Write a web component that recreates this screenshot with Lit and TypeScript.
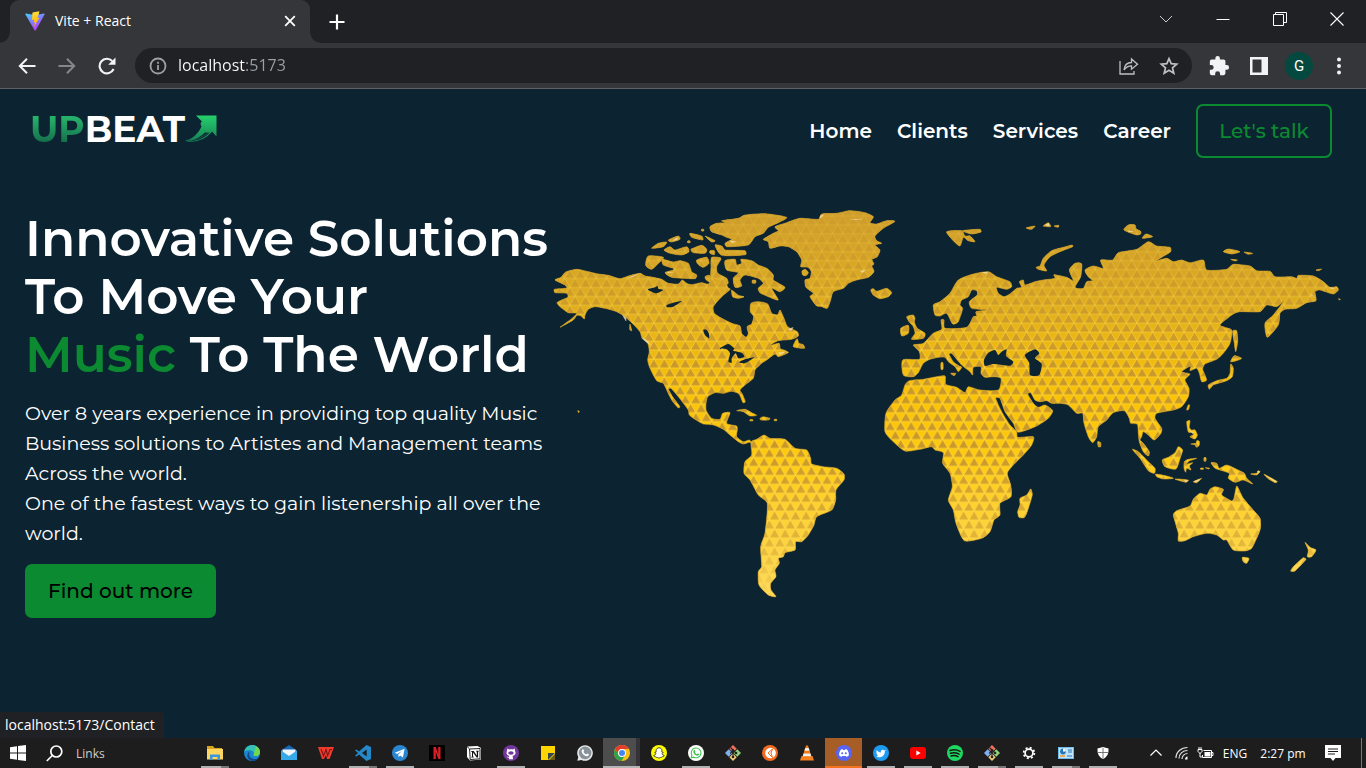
import { LitElement, html, css, svg, nothing } from "lit";
import { customElement, property } from "lit/decorators.js";
import { classMap } from "lit/directives/class-map.js";

/* ---------- World map ---------- */

// A run of outline points, in thirds of a map unit, counted from the run's origin.
type Run = [number, number, string];

// Joins the runs into one closed coast line, rounded a little at each point.
const outline = (runs: Run[]) => {
  const pts = runs.flatMap(([ox, oy, points]) =>
    points
      .trim()
      .split(/\s+/)
      .map((p) => {
        const [x, y] = p.split(",").map(Number);
        return [ox + x / 3, oy + y / 3];
      }),
  );
  const n = pts.length;
  const fmt = (v: number) => v.toFixed(1);
  let d = `M${fmt(pts[0][0])} ${fmt(pts[0][1])}`;
  for (let i = 0; i < n; i++) {
    const a = pts[(i + n - 1) % n];
    const b = pts[i];
    const c = pts[(i + 1) % n];
    const e = pts[(i + 2) % n];
    const len = Math.hypot(c[0] - b[0], c[1] - b[1]);
    const handle = (p: number[], q: number[]) => {
      const l = Math.hypot(q[0] - p[0], q[1] - p[1]) || 1;
      const k = Math.min(l / 9, len / 4) / l;
      return [(q[0] - p[0]) * k, (q[1] - p[1]) * k];
    };
    const h1 = handle(a, c);
    const h2 = handle(b, e);
    d += `C${fmt(b[0] + h1[0])} ${fmt(b[1] + h1[1])} ${fmt(c[0] - h2[0])} ${fmt(c[1] - h2[1])} ${fmt(c[0])} ${fmt(c[1])}`;
  }
  return d + "Z";
};

const each = (ox: number, oy: number, shapes: string) =>
  shapes
    .split("|")
    .map((s) => outline([[ox, oy, s]]))
    .join("");

const northAmerica = each(
  545,
  200,
  `30,240 48,232 62,216 95,208 125,214 160,222 190,226 225,236 250,228 285,220 300,228 325,232 350,238 370,250 400,252 412,240 425,250 440,254 470,248 490,252 510,238 530,250 540,235 548,262 556,268 530,290 505,320 508,340 530,355 560,370 585,378 590,400 603,412 610,400 606,380 620,372 626,350 616,335 618,310 640,305 668,312 680,340 698,344 705,330 715,350 728,380 757,395 760,408 740,418 700,422 675,436 702,430 706,446 722,452 730,458 700,470 690,462 665,480 650,490 630,510 625,535 600,555 585,570 592,582 601,605 594,608 582,582 560,574 535,580 510,578 488,590 483,612 484,632 500,655 525,658 533,640 555,638 545,670 575,678 577,690 575,710 595,725 613,720 621,730 613,727 595,732 580,725 555,705 535,688 505,675 475,672 450,658 433,645 430,630 400,590 378,565 370,567 384,592 405,620 400,624 380,600 365,570 355,550 335,542 315,505 308,480 313,455 308,430 290,410 285,395 262,370 240,350 215,335 180,325 150,320 130,328 120,345 118,357 108,348 96,346 85,360 45,382 80,356 95,340 70,338 45,320 36,308 50,300 68,292 66,280 30,278 28,268 65,264 60,255`,
);

const arcticIslands = each(
  545,
  200,
  `495,80 515,70 540,68 530,62 580,55 600,45 660,41 725,52 700,68 670,82 655,100 630,110 610,135 545,140 540,130 560,118 545,112 530,105 500,95|
  320,145 340,130 365,126 355,140|370,120 400,108 405,118 380,126|357,150 375,140 390,150 425,140 432,155 410,165 375,160|435,100 470,108 473,120 440,112|480,108 510,122 500,126|438,148 470,136 485,148 480,160 445,158|495,152 508,152 508,164 495,160|510,135 530,138 540,150 600,152 602,164 530,166|
  310,168 355,172 340,190 320,208 302,196|352,178 385,186 405,182 430,190 440,215 455,225 450,236 380,232 360,218 385,210 385,205 355,195|455,180 485,172 492,190 475,202 458,192|500,172 528,175 515,200 518,220 545,235 548,252 500,250 498,200|480,230 494,226 498,248 484,240|
  540,182 570,178 575,195 590,190 588,178 620,182 640,195 665,205 685,225 685,240 720,262 705,275 680,265 700,300 670,290 645,278 640,265 655,250 640,235 600,225 585,240 590,258 570,262 565,235 580,218 545,210|560,270 580,286 597,290 580,295 563,290|622,241 632,241 632,249 622,249|745,440 756,416 762,430 775,434 778,445|255,372 260,392 254,388|98,632 103,634 101,638|428,123 435,123 435,128 428,128|470,88 476,88 476,93 470,93`,
);

const caribbeanAndSouth = each(
  690,
  380,
  `140,92 165,88 185,98 200,106 180,108 160,95|210,115 220,110 240,115 235,120 212,120|180,119 188,119 188,123 180,123|253,118 260,118 260,122 253,122|
  183,186 200,178 222,165 240,175 285,178 315,205 350,210 362,235 365,252 400,260 440,265 462,282 462,300 438,330 437,360 425,390 380,410 372,435 355,465 335,485 317,485 315,510 285,518 280,530 265,535 268,550 255,570 258,590 242,610 243,630 258,650 235,645 207,615 205,575 215,560 212,500 225,460 232,370 205,345 180,300 162,280 165,245 185,225`,
);

const northAtlantic = each(
  780,
  200,
  `-50,118 -20,100 -5,92 -15,80 20,68 60,55 115,58 125,42 170,40 210,32 255,38 280,50 270,68 290,72 320,62 345,64 310,85 285,108 290,122 305,130 285,135 300,150 292,170 276,178 282,192 275,198 282,215 265,232 230,240 205,250 190,265 160,275 152,300 142,325 125,320 110,318 90,290 100,280 78,262 75,240 90,235 94,215 84,202 62,200 65,180 50,155 25,140 0,138 -30,145 -35,125|
  66,213 76,208 85,218 78,227 68,225|272,270 280,266 290,274 320,265 335,278 325,290 300,296 280,285|
  500,95 545,92 555,108 570,108 585,125 565,122 550,112 540,138 520,122|548,92 600,88 603,96 575,102|738,84 765,78 755,88|790,78 805,68 812,80|822,78 836,76 834,82|
  380,350 400,345 405,355 403,366 412,385 435,400 430,415 395,418 405,400 400,380 388,366|362,385 385,376 385,400 365,408|483,488 489,488 489,508 483,508|512,520 527,520 522,527`,
);

const oldWorld = outline([
  [780, 200, `460,315 480,305 510,280 535,240 580,222 625,215 650,230 690,245 695,260 680,268 650,262 655,280 672,290 690,282 710,265 725,262 718,245 730,240 735,255 765,245 790,240 825,235 822,224 860,232 880,242`],
  [1040, 210, `88,180 105,160 125,162 122,200 105,232 130,235 140,215 158,212 145,200 135,180 160,168 190,175 182,150 218,150 235,128 290,118 325,95 350,108 390,112 392,125 350,152 380,145 400,155 425,150 450,158 490,150 500,180 560,178 580,163 630,168 650,182 690,184 705,200 755,200 770,205 775,196 820,198 850,215 870,232 890,230 895,240 880,252 840,240 825,245 828,272 800,278 770,295 735,298 720,310 715,345 682,382 675,340 700,315 730,275 710,290 680,285 660,305 600,305 580,312 540,345 575,360 570,400 550,430 530,448 495,462 488,478 500,510 485,515 478,490 470,475 450,482 452,468 425,485 450,492 435,510 447,535 445,560 425,590 400,600 350,610`],
  [1060, 390, `285,85 305,115 303,130 283,150 265,135 250,125 245,140 240,150 250,160 268,185 265,198 250,185 238,155 235,130 232,103 212,100 208,85 193,62 160,68 140,90 115,110 110,140 98,158 85,140 72,100 68,70 50,70 25,45 0,40`],
  [870, 350, `545,160 530,152 510,155 495,150 482,128 473,132 490,160 505,172 525,165 548,182 535,205 500,228 445,247 430,220 405,185 390,145 377,145 395,185 420,225 440,245 443,262 490,260 485,285 460,315 430,345 412,370 422,405 423,440 390,460 390,495 372,510 360,545 335,565 283,572 258,520 250,480 235,450 247,410 240,370 218,340 220,308 195,300 185,290 150,298 105,303 70,275 45,245 48,190 75,150 95,135 105,105 118,92 160,88 190,82 225,78 227,103 260,112 285,128 295,110 330,120 385,120 393,85 370,80 345,82 333,70 333,50 310,52 308,75 300,65 275,45 262,30 245,10 237,12 250,35 268,48 275,52 265,65 255,50 235,35 225,22 205,22 180,28 160,40 145,68 130,80 100,75 98,30 148,28`],
  [780, 200, `418,455 400,435 430,430 460,400 485,388 483,360 492,360 495,385 560,382 580,350 590,348 588,335 620,330 575,325 568,305 592,285 590,272 575,270 565,290 545,300 540,315 548,325 535,365 518,372 500,340 480,348 465,345`],
]);

const madagascar = each(870, 350, `482,417 487,435 470,490 462,503 447,502 443,485 450,465 450,445 470,435`);

const northernIslands = each(
  1040,
  210,
  `0,168 10,145 35,122 70,112 97,105 98,110 60,125 30,140 12,165 20,183 -5,178 -12,172|252,60 265,45 285,45 288,56 302,64 302,72 290,75|307,85 318,72 338,80|550,125 565,117 600,125 575,132|612,126 638,130 625,133|572,148 592,150 585,153|828,180 845,177 835,182|895,266 901,267 899,270|
  578,363 590,362 593,395 587,425 583,400|572,455 583,437 605,445 590,452|572,462 580,475 577,500 560,512 520,525 508,538 505,525 530,512 560,505 570,490`,
);

const oceania = each(
  1060,
  390,
  `380,60 384,46 389,45 386,58|380,95 390,92 388,112 394,120 405,120 412,135 405,147 390,140 400,134 398,128 385,126|392,162 408,160 410,152 418,154 418,165 410,172 404,164|113,155 122,158 122,170 115,170|217,178 235,185 265,215 285,235 283,250 265,242 240,205|287,252 320,258 340,265 310,267 290,260|345,267 385,270 378,277|400,275 425,265 410,278|
  307,210 325,202 345,188 355,170 368,180 362,200 348,237 315,230|373,215 385,208 410,205 388,213 380,222 398,218 388,228 393,240 380,235 377,247 372,235|432,203 438,203 438,213 432,213|422,234 430,234 430,238 422,238|436,233 448,234 446,237|
  453,218 470,220 478,235 500,225 530,238 553,250 560,265 578,282 550,270 525,277 505,265 508,250 480,240 465,235|572,252 590,250 594,242 600,245 590,255|612,253 630,262 652,275 645,278 625,266|
  340,375 350,362 390,348 400,328 420,310 440,315 450,298 465,290 490,298 485,315 515,333 522,325 530,288 542,310 550,325 575,355 600,385 600,420 575,475 555,483 520,480 500,450 490,450 470,435 440,430 400,440 375,452 355,453 355,430|
  547,502 567,505 560,520 550,515|735,457 750,472 768,480 755,500 742,500 745,480|730,503 738,508 705,543 692,543 700,530`,
);

const inlandWater =
  each(545, 200, `308,268 330,262 338,258 340,266 355,270 335,280 320,275|365,315 385,308 410,303 385,320 366,322|475,390 485,390 492,402 492,415 480,405|525,445 550,432 568,445 565,452 590,458 598,470 580,475 572,460 560,475 560,488 550,485 555,460 545,448|582,487 600,478 628,472 600,490`) +
  each(780, 200, `612,480 625,458 645,450 655,465 665,455 680,448 678,468 700,485 690,497 640,492 615,498|735,465 765,448 778,460 765,475 785,492 778,525 750,525 748,490`);

const land = northAmerica + arcticIslands + caribbeanAndSouth + northAtlantic + oldWorld + madagascar + northernIslands + oceania;

const snow = each(545, 200, `248,236 262,228 284,220 265,230|232,345 243,352 243,364|288,412 305,420 318,436 300,424|305,268 322,265 310,272|555,122 575,125 560,128|365,215 388,216 370,219|728,388 745,382 738,392|700,458 722,455 705,464|382,122 398,112 396,120`) +
  each(780, 200, `120,48 132,44 122,54|210,58 250,56 225,60|240,214 256,210 248,218|795,76 806,70 808,78|604,217 622,216 618,221`) +
  each(1060, 390, `390,122 402,128 398,131|614,255 650,274 645,276|372,270 384,272 377,276|402,274 420,267 410,277|592,243 600,245 594,248`) +
  each(1040, 210, `264,62 282,64 268,67|812,252 820,255 815,257|868,232 884,234 876,237|508,528 530,516 516,522`);

@customElement("world-map")
class WorldMap extends LitElement {
  static styles = css`
    :host { display: block; }
    .map { display: block; width: 100%; height: auto; }
  `;
  render() {
    return html`<svg class="map" viewBox="553 204 788 400" role="img" aria-label="World map">
      <defs>
        <linearGradient id="gold" gradientUnits="userSpaceOnUse" x1="0" y1="210" x2="0" y2="600">
          <stop offset="0" stop-color="#cf9e2c" />
          <stop offset=".2" stop-color="#dcab20" />
          <stop offset=".48" stop-color="#fac304" />
          <stop offset=".65" stop-color="#ffcc10" />
          <stop offset="1" stop-color="#fcd95a" />
        </linearGradient>
        <linearGradient id="fade" gradientUnits="userSpaceOnUse" x1="0" y1="210" x2="0" y2="600">
          <stop offset="0" stop-color="#cf9e2c" stop-opacity=".7" />
          <stop offset=".25" stop-color="#dcab20" stop-opacity=".2" />
          <stop offset=".4" stop-color="#f8c410" stop-opacity="0" />
          <stop offset=".62" stop-color="#ffd030" stop-opacity="0" />
          <stop offset=".85" stop-color="#fdd548" stop-opacity=".5" />
          <stop offset="1" stop-color="#fcd95a" stop-opacity=".95" />
        </linearGradient>
        <pattern id="triangles" patternUnits="userSpaceOnUse" x="769.35" y="439.5" width="10.5" height="17.9">
          <path d="M0 8.95H10.5M0 17.9H10.5M0 0H10.5M0 8.95L5.25 0L10.5 8.95L5.25 17.9L0 8.95" fill="none" stroke="#ffdc55" stroke-opacity=".8" stroke-width=".7" />
          <path d="M5.25 .6L9.8 8.5H.7Z M0 9.55L4.55 17.45H0Z M10.5 9.55V17.45H5.95Z" fill="#c9982c" />
        </pattern>
      </defs>
      <path d=${land} fill="url(#gold)" />
      <path d=${land} fill="url(#triangles)" />
      <path d=${land} fill="url(#fade)" stroke="#cf9f2e" stroke-width=".6" stroke-linejoin="round" />
      <path d=${snow} fill="#f3dfae" opacity=".8" />
      <path d=${inlandWater} fill="#0c2432" />
    </svg>`;
  }
}

/* ---------- Browser chrome ---------- */

@customElement("browser-chrome")
class BrowserChrome extends LitElement {
  static styles = css`
    :host { display: block; font-family: "Open Sans", "Noto Sans", sans-serif; color: #fff; }
    button { border: 0; padding: 0; background: none; color: inherit; font: inherit; display: grid; place-items: center; }
    svg { display: block; }
    .strip { display: flex; align-items: stretch; height: 43px; background: #202124; }
    .corner { width: 10px; height: 10px; align-self: flex-end; background: radial-gradient(circle at 0 0, #202124 9px, #35363a 10px); }
    .corner.end { background: radial-gradient(circle at 10px 0, #202124 9px, #35363a 10px); margin-right: -10px; }
    .tab { display: flex; align-items: center; width: 300px; background: #35363a; border-radius: 9px 9px 0 0; padding: 0 12px 2px 15px; box-sizing: border-box; gap: 10px; font-size: 14px; }
    .name { flex: 1; }
    .add { width: 54px; }
    .controls { display: flex; margin-left: auto; padding-right: 1px; }
    .controls button { width: 57px; padding-bottom: 6px; }
    .bar { display: flex; align-items: center; height: 45px; background: #35363a; border-bottom: 1px solid #5f6063; padding-right: 7px; }
    .nav { display: flex; padding: 0 8px 0 7px; }
    .nav button { width: 40px; height: 36px; }
    .omnibox { flex: 1; display: flex; align-items: center; height: 35px; border-radius: 18px; background: #202124; padding: 0 9px 0 14px; gap: 11px; }
    .url { flex: 1; min-width: 0; border: 0; padding: 0 0 1px; outline: 0; font: 16px "Open Sans", "Noto Sans", sans-serif; color: transparent; background: linear-gradient(90deg, #fff 67px, #9aa0a6 67px); -webkit-background-clip: text; background-clip: text; }
    .omnibox button { width: 28px; height: 32px; }
    .acts { display: flex; gap: 12px; }
    .tools { display: flex; padding-left: 7px; }
    .tools button { width: 40px; height: 36px; }
    .avatar { width: 28px; height: 28px; border-radius: 50%; background: #04493f; display: grid; place-items: center; font: 15px Roboto, sans-serif; }
  `;
  render() {
    return html`
      <div class="strip">
        <div class="corner"></div>
        <div class="tab">
          <svg width="20" height="20" viewBox="0 0 32 32" aria-hidden="true">
            <defs>
              <linearGradient id="v" x1="0" y1="0" x2=".6" y2="1"><stop stop-color="#41d1ff" /><stop offset="1" stop-color="#bd34fe" /></linearGradient>
              <linearGradient id="b" x1=".4" y1="0" x2=".5" y2="1"><stop stop-color="#ffea83" /><stop offset=".1" stop-color="#ffdd35" /><stop offset="1" stop-color="#ffa800" /></linearGradient>
            </defs>
            <path d="M31.5 5.2L17 31.1a.9.9 0 0 1-1.5 0L.5 5.2a.9.9 0 0 1 .9-1.3L16 6.5l14.6-2.6a.9.9 0 0 1 .9 1.3z" fill="url(#v)" />
            <path d="M23 .2L12.3 2.3a.4.4 0 0 0-.4.4l-.7 11.2a.4.4 0 0 0 .5.4l3-.7-1 4.8 2.4-.6-1.9 7.6 9-14.8-3.5.6L22 5z" fill="url(#b)" />
          </svg>
          <span class="name">Vite + React</span>
          <button aria-label="Close tab"><svg width="16" height="16" viewBox="0 0 16 16" stroke="#fff" stroke-width="1.8"><path d="M3.2 3.2l9.6 9.6m0-9.6l-9.6 9.6" /></svg></button>
        </div>
        <div class="corner end"></div>
        <button class="add" aria-label="New tab"><svg width="16" height="16" viewBox="0 0 16 16" stroke="#fff" stroke-width="2.2"><path d="M8 .5v15M.5 8h15" /></svg></button>
        <div class="controls">
          <button aria-label="Search tabs"><svg width="14" height="14" viewBox="0 0 14 14" fill="none" stroke="#ccc"><path d="M1 4l6 6 6-6" /></svg></button>
          <button aria-label="Minimise"><svg width="14" height="14" viewBox="0 0 14 14" stroke="#fff"><path d="M.5 7.5h13" /></svg></button>
          <button aria-label="Restore"><svg width="14" height="14" viewBox="0 0 14 14" fill="none" stroke="#fff"><path d="M2.5 3V.5h11v10H11M.5 2.5h10v11H.5z" /></svg></button>
          <button aria-label="Close"><svg width="14" height="14" viewBox="0 0 14 14" stroke="#fff" stroke-width="1.1"><path d="M.5.5l13 13m0-13l-13 13" /></svg></button>
        </div>
      </div>
      <div class="bar">
        <div class="nav">
          <button aria-label="Back"><svg width="18" height="18" viewBox="0 0 18 18" fill="none" stroke="#f1f3f4" stroke-width="2"><path d="M17.5 9H2.5M9 1.8L1.8 9 9 16.2" /></svg></button>
          <button aria-label="Forward"><svg width="18" height="18" viewBox="0 0 18 18" fill="none" stroke="#83868a" stroke-width="2"><path d="M.5 9h15M9 1.8L16.2 9 9 16.2" /></svg></button>
          <button aria-label="Reload"><svg width="18" height="18" viewBox="0 0 18 18" fill="none" stroke="#f1f3f4" stroke-width="2.1"><path d="M15.6 12A7.3 7.3 0 1 1 14.2 4" /><path d="M17.5.5v7.3h-7.3z" fill="#f1f3f4" stroke="none" /></svg></button>
        </div>
        <div class="omnibox">
          <svg width="18" height="18" viewBox="0 0 18 18" fill="none" stroke="#9aa0a6" stroke-width="1.8" aria-hidden="true"><circle cx="9" cy="9" r="7.5" /><path d="M9 8v5M9 4.8v1.9" /></svg>
          <input class="url" aria-label="Address" value="localhost:5173" />
          <div class="acts">
            <button aria-label="Share"><svg width="20" height="20" viewBox="0 0 20 20" fill="none" stroke="#bdc1c6" stroke-width="1.3"><path d="M1 5v13h14v-3M5 14c.5-5 3.5-7.5 7.5-7.5V3l6 5.2-6 5V9.8C9.500 9.800 7 11 5 14z" /></svg></button>
            <button aria-label="Bookmark"><svg width="20" height="20" viewBox="0 0 20 20" fill="none" stroke="#bdc1c6" stroke-width="1.7"><path d="M10 2.6l2.2 5.1 5.5.5-4.2 3.6 1.3 5.4L10 14.3l-4.8 2.9 1.3-5.4-4.2-3.6 5.5-.5z" /></svg></button>
          </div>
        </div>
        <div class="tools">
          <button aria-label="Extensions"><svg width="22" height="22" viewBox="0 0 24 24" fill="#f1f3f4"><path d="M20.5 11H19V7c0-1.1-.9-2-2-2h-4V3.5a2.5 2.5 0 0 0-5 0V5H4a2 2 0 0 0-2 2v3.8h1.5a2.7 2.7 0 0 1 0 5.4H2V20c0 1.1.9 2 2 2h3.8v-1.5a2.7 2.7 0 0 1 5.4 0V22H17a2 2 0 0 0 2-2v-4h1.5a2.5 2.5 0 0 0 0-5z" /></svg></button>
          <button aria-label="Side panel"><svg width="18" height="18" viewBox="0 0 18 18"><path fill="#f1f3f4" fill-rule="evenodd" d="M0 0h18v18H0zM2.5 2.5v13h9v-13z" /></svg></button>
          <button aria-label="Profile"><span class="avatar">G</span></button>
          <button aria-label="Menu"><svg width="18" height="18" viewBox="0 0 18 18" fill="#f1f3f4"><circle cx="9" cy="2.5" r="2" /><circle cx="9" cy="9" r="2" /><circle cx="9" cy="15.5" r="2" /></svg></button>
        </div>
      </div>
    `;
  }
}

/* ---------- Taskbar ---------- */

type App = { name: string; state?: string; art: unknown };

const git = svg`<path d="M8 0l3.700 3.700L8 7.400 4.300 3.700z" fill="#f0705f"/><path d="M12.300 4.300L16 8l-3.700 3.700L8.600 8z" fill="#8fd07a"/><path d="M3.700 4.300L7.400 8l-3.700 3.700L0 8z" fill="#7fb0f0"/><path d="M8 8.600l3.700 3.700L8 16l-3.700-3.700z" fill="#f0cd7c"/><path d="M5.500 2.500L11 8M8 5.500v7M8 5.500L5.200 8.500" stroke="#222" stroke-width="1.100" fill="none"/><circle cx="8" cy="5.300" r="1.200" fill="#222"/><circle cx="11" cy="8" r="1.300" fill="#222"/><circle cx="8" cy="12" r="1.300" fill="#222"/>`;

const phone = "M5.400 4.600c.6-.8 1.300-.3 1.700 1 .2.600-.6 1-.5 1.300.5 1.200 1.400 2 2.500 2.500.4.100.8-1 1.300-.8 1.400.5 1.700.9 1.300 1.600-.6 1-1.800 1.300-3.300.7-2-.7-3.600-2.700-3.800-4.300-.1-.8.3-1.500.8-2z";

const apps: App[] = [
  { name: "File Explorer", state: "many", art: svg`<path d="M0 1h6l1.500 2H15v4H0z" fill="#d9a520"/><path d="M0 4h16v10.500H0z" fill="#ffd75e"/><path d="M3 15V9.500h10V15h-2.500v-3h-5v3z" fill="#3a97dd"/>` },
  { name: "Edge", art: svg`<circle cx="8" cy="8" r="8" fill="#1a86cf"/><path d="M.5 6C2 1.500 6 0 9 .1c4 .2 7 3.400 7 7 0 3-2.500 4-4.500 4-1.600 0-2.300-.8-1.800-1.600C10.600 8 9.500 6 7 5.500 4 5 1.500 5.500.5 7z" fill="#35c1b4"/><path d="M12 1.200c2.500 1.400 4 3.600 4 6 0 2.800-2.400 3.900-4.500 3.900-1.600 0-2.300-.8-1.800-1.600z" fill="#6fd84f"/><path d="M7 6c-3 1-3 8 4 8 1.500 0 3-.6 4-1.700-3 5-8 4.200-10.500 1.700C2 11 3.500 7 7 6z" fill="#114a8b"/>` },
  { name: "Mail", art: svg`<path d="M0 5.500L8 0l8 5.500V15H0z" fill="#1566b3"/><path d="M1.500 4.500h13V9L8 12 1.500 9z" fill="#f2f6fa"/><path d="M0 5.500L8 11l8-5.500V15H0z" fill="#36a9e8"/>` },
  { name: "WPS Office", art: svg`<path d="M0 2h16l-4.500 12H9L8 10l-2 4H4z" fill="#f23b2f"/><path d="M3 4l2.500 7L8 4.500l1.700 6L12 4.500h2" fill="none" stroke="#7a1512" stroke-width="1.100"/>` },
  { name: "VS Code", state: "many", art: svg`<path d="M11.500 0L16 2v12l-4.500 2L4 9.500 1.500 11.500 0 10.700 3 8 0 5.300l1.500-.8L4 6.500zM11.700 4.600L7 8l4.700 3.400z" fill-rule="evenodd" fill="#2489ca"/>` },
  { name: "Telegram", state: "open", art: svg`<circle cx="8" cy="8" r="8" fill="#2a86d0"/><path d="M2.800 7.800l9.800-4-1.700 8.800-2.800-2-1.500 1.500-.4-2.600 3.800-3.600-4.900 3z" fill="#fff"/>` },
  { name: "Netflix", art: svg`<path d="M0 0h16v16H0z" fill="#000"/><path d="M4.500 2h2.300l2.400 7V2h2.300v12.200l-2.200-.3-2.500-7v7l-2.300.3z" fill="#d81f26"/>` },
  { name: "Notion", art: svg`<path d="M1 1.500L11.500 1 15 3v11.500L4 15.500 1 12z" fill="#fff"/><path d="M3.600 4L14 3.500v10.300L4.200 14.500zM1 1.500L3.600 4" fill="none" stroke="#222"/><path d="M5.300 6h2.500l3 4.700V6.500H10V5.700h2.900v.8h-.8v6h-1.500L7 7.500v4.300h.9v.8H5.300v-.8H6V6.900h-.7z" fill="#111"/>` },
  { name: "GitHub Desktop", state: "open", art: svg`<circle cx="8" cy="8" r="8" fill="#71379b"/><path d="M4.300 3.500l2 1c1-.3 2.500-.3 3.500 0l1.900-1 .3 2.200c1.500 3-.2 4.900-2.300 5.100l.3 3.400H6v-1.500c-1.500.3-2-.6-2.500-1.400 1 .3 1.500.8 2.500.6l.2-1.100C4 10.500 2.800 8.500 4 5.700z" fill="#fff"/><ellipse cx="8" cy="8" rx="2.700" ry="1.800" fill="#71379b"/>` },
  { name: "Sticky Notes", art: svg`<path d="M1 1h14v8l-6 6H1z" fill="#ffd500"/><path d="M8 8h7L8 15z" fill="#37474f"/><path d="M8 15l7-7v7z" fill="#ffd500" opacity=".35"/>` },
  { name: "WhatsApp Beta", art: svg`<path d="M.3 15.700l1-3.700A7.800 7.800 0 1 1 4.500 15z" fill="#e6e9ea"/><circle cx="8.100" cy="7.900" r="6.300" fill="#87929a"/><path d=${phone} fill="#fff"/>` },
  { name: "Chrome", state: "active", art: svg`<circle cx="8" cy="8" r="8" fill="#fbc116"/><path d="M1.100 4A8 8 0 0 1 14.900 4H8a4 4 0 0 0-3.600 5.700z" fill="#e33b2e"/><path d="M1.100 4A8 8 0 0 0 7.500 16l3.700-6A4 4 0 0 1 4.500 10z" fill="#2ba24c"/><circle cx="8" cy="8" r="3.900" fill="#fff"/><circle cx="8" cy="8" r="3" fill="#4285f4"/>` },
  { name: "Snapchat", art: svg`<circle cx="8" cy="8" r="8" fill="#fffc00"/><path d="M8 2.800c1.800 0 2.900 1.200 2.900 3v1.300l1.300.3-1.100 1.300c.4 1 1.100 1.700 2.200 2-.3.8-1.200.8-1.900 1-.6.9-1.500.4-2.200.9-.8.5-1.700.5-2.500 0-.7-.5-1.600 0-2.200-.9-.7-.2-1.600-.2-1.900-1 1.100-.3 1.800-1 2.200-2L3.800 7.400l1.300-.3V5.800c0-1.800 1.100-3 2.900-3z" fill="#fff" stroke="#222" stroke-width=".8"/>` },
  { name: "WhatsApp", state: "open", art: svg`<circle cx="8" cy="8" r="8" fill="#fff"/><path d="M3.200 12.800l.7-2.400a4.900 4.900 0 1 1 1.900 1.800z" fill="none" stroke="#3fc351" stroke-width="1.100"/><path d=${phone} fill="#3fc351" transform="translate(1.500 1.500) scale(.82)"/>` },
  { name: "Git Bash", art: git },
  { name: "Postman", art: svg`<circle cx="8" cy="8" r="8" fill="#f26b21"/><circle cx="8.500" cy="8" r="5.300" fill="#fff"/><path d="M10.500 4L6 8l4.500 4.500L9 8z" fill="#fff" stroke="#f26b21" stroke-width="1"/>` },
  { name: "VLC", art: svg`<path d="M2.500 11h11L15 15.500H1z" fill="#f58220"/><path d="M7 .5h2l3.500 11.500c-1 1.400-8 1.400-9 0z" fill="#f27b13"/><path d="M6.300 3h3.400l.9 2.700H5.400zM4.500 8.500h7l.8 2.700H3.700z" fill="#eee"/>` },
  { name: "Discord", state: "alert", art: svg`<circle cx="8" cy="8" r="8" fill="#5865f2"/><path d="M5 4.500l1.500-.4.5.8h2l.5-.8 1.500.4c1.600 2 2 4 1.800 6L10.700 12l-.8-1.100H6.100L5.300 12l-2.100-1.500c-.2-2 .2-4 1.800-6z" fill="#fff"/><circle cx="6.200" cy="8.300" r="1" fill="#5865f2"/><circle cx="9.800" cy="8.300" r="1" fill="#5865f2"/>` },
  { name: "Twitter", state: "open", art: svg`<circle cx="8" cy="8" r="8" fill="#1d9bf0"/><path d="M12.800 5.200l-1 1c.2 3.800-2.800 6.300-6.300 6.100-.9 0-1.800-.3-2.500-.8.9.1 1.800-.2 2.400-.7-.8-.1-1.400-.6-1.600-1.300h.8C3.700 9.200 3.300 8.500 3.300 7.600l.8.2c-.8-.6-.9-1.700-.4-2.500 1.100 1.300 2.500 2 4.100 2.100-.4-2.300 1.900-3.300 3.200-2l1.200-.4z" fill="#fff"/>` },
  { name: "YouTube", state: "open", art: svg`<rect y="2" width="16" height="12" rx="3" fill="#f00"/><path d="M6.300 5.500L10.700 8l-4.400 2.500z" fill="#fff"/>` },
  { name: "Spotify", state: "open", art: svg`<circle cx="8" cy="8" r="8" fill="#1ed760"/><path d="M3 5.500c3.500-1 7-.8 10 .8M3.500 8.300c3-.8 6-.5 8.500.8M4 10.900c2.500-.6 5-.4 7 .8" fill="none" stroke="#191414" stroke-width="1.500" stroke-linecap="round"/>` },
  { name: "Git GUI", state: "many", art: git },
  { name: "Settings", state: "open", art: svg`<circle cx="8" cy="8" r="3.900" fill="none" stroke="#fff" stroke-width="1.700"/><circle cx="8" cy="8" r="5.300" fill="none" stroke="#fff" stroke-width="1.800" stroke-dasharray="2 2.163"/>` },
  { name: "Control Panel", state: "many", art: svg`<path d="M0 2h16v12H0z" fill="#6fbdf0"/><path d="M1 3h14v10H1z" fill="#bfe3f8"/><circle cx="5" cy="6.500" r="2.900" fill="#2577b9"/><path d="M5 6.500V3.600a2.900 2.900 0 0 1 2.900 2.900z" fill="#fff"/><path d="M10 5h4M10 7h4M9 11h5" stroke="#2577b9"/><path d="M2 11h5" stroke="#f39b20" stroke-width="1.500"/>` },
  { name: "Security", state: "open", art: svg`<path d="M8 2l5.500 1.500c.3 5-1.300 8.500-5.500 10.500-4.200-2-5.800-5.500-5.500-10.500z" fill="#fff"/><path d="M8 3v10.500M2.500 7.500h11" stroke="#666" stroke-width=".9"/>` },
];

@customElement("task-bar")
class TaskBar extends LitElement {
  static styles = css`
    :host { display: flex; height: 30px; background: #1d1d1d; color: #fff; font: 12px "Open Sans", "Noto Sans", sans-serif; }
    button { border: 0; padding: 0; background: none; color: inherit; font: inherit; display: grid; place-items: center; }
    svg { display: block; }
    .start { width: 36px; }
    .search { width: 160px; display: flex; align-items: center; gap: 13px; padding-left: 10px; color: #d0d0d0; }
    .apps { display: flex; }
    .app { width: 37px; position: relative; }
    .open::after, .many::after { content: ""; position: absolute; left: 5px; right: 4px; bottom: 0; height: 2px; background: #b0b0b0; }
    .many::after { background: linear-gradient(90deg, #b0b0b0 20px, #777 20px); }
    .active { background: linear-gradient(90deg, #4d4d4d 33px, #353338 33px); box-shadow: inset 0 -2px #b5b5b5; }
    .alert { background: #a65d26; box-shadow: inset 0 -2px #f5721c; }
    .tray { display: flex; align-items: center; margin-left: auto; padding-right: 7px; border-right: 1px solid #777; margin-right: 4px; }
    .tray button { height: 30px; }
    .up { width: 26px; }
    .net { width: 26px; }
    .power { width: 20px; }
    .lang { width: 40px; }
    .time { width: 56px; }
    .notes { width: 43px; }
  `;
  render() {
    return html`
      <button class="start" aria-label="Start"><svg width="16" height="16" viewBox="0 0 16 16" fill="#fff"><path d="M0 2.3L7 1.200v6.300H0zM8 1l8-1v7.500H8zM0 8.500h7v6.300l-7-1zM8 8.500h8V16l-8-1.100z" /></svg></button>
      <button class="search">
        <svg width="17" height="17" viewBox="0 0 17 17" fill="none" stroke="#fff" stroke-width="1.7" aria-hidden="true"><circle cx="10.3" cy="6.5" r="5.5" /><path d="M6.3 10.5L.8 16" /></svg>
        Links
      </button>
      <div class="apps">
        ${apps.map(
          (a) => html`<button class=${classMap({ app: true, [a.state ?? "idle"]: true })} aria-label=${a.name}>
            <svg width="16" height="16" viewBox="0 0 16 16">${a.art}</svg>
          </button>`,
        )}
      </div>
      <div class="tray">
        <button class="up" aria-label="Hidden icons"><svg width="14" height="14" viewBox="0 0 14 14" fill="none" stroke="#fff" stroke-width="1.2"><path d="M1.5 9.5L7 4l5.5 5.5" /></svg></button>
        <button class="net" aria-label="Network"><svg width="14" height="14" viewBox="0 0 14 14" fill="none" stroke="#e0e0e0" stroke-width="1.2"><path d="M1 12C1 6 6 1.5 12.5 1.5M4 12.5c0-4.500 3.500-8 8.500-8M7 13c0-3 2.500-5.500 5.500-5.500" /><path d="M10 13.500c0-1.500 1-3 2.500-3v3z" fill="#fff" stroke="none" /></svg></button>
        <button class="power" aria-label="Battery"><svg width="17" height="14" viewBox="0 0 17 14" fill="none" stroke="#fff"><path d="M6.5 4.5h8v7h-9V9M15 6.5h1v3h-1M1 3.5h4v2L3 7.5 1 5.5zM2 3V1M4 3V1M3 7v4h2" /><path d="M7.5 6h6v4.5h-6z" fill="#fff" stroke="none" /></svg></button>
        <button class="lang">ENG</button>
        <button class="time">2:27 pm</button>
        <button class="notes" aria-label="Notifications"><svg width="16" height="16" viewBox="0 0 16 16"><path d="M0 0h16v13h-5.500L8 16l-2.500-3H0z" fill="#fff" /><path d="M3 4h10M3 6.5h10M3 9h7" stroke="#1d1d1d" /></svg></button>
      </div>
    `;
  }
}

/* ---------- Page ---------- */

@customElement("site-page")
class SitePage extends LitElement {
  @property() status = "localhost:5173/Contact";

  static styles = css`
    :host { display: block; position: relative; background: #0c2432; color: #fff; font-family: Montserrat, Inter, sans-serif; }
    .header { display: flex; align-items: center; justify-content: space-between; padding: 15px 34px 0 30px; }
    .logo { display: flex; align-items: center; padding-bottom: 4px; font-size: 36px; line-height: 44px; font-weight: 700; color: #fff; text-decoration: none; }
    .up { color: transparent; background: linear-gradient(#27b06a 25%, #14704c 80%); -webkit-background-clip: text; background-clip: text; }
    .menu { display: flex; align-items: center; gap: 25px; font-size: 20px; font-weight: 600; }
    .menu a { color: #fff; text-decoration: none; }
    .menu .talk { box-sizing: border-box; min-width: 136px; padding: 0 20px; border: 2px solid #0b8a31; border-radius: 7px; line-height: 50px; font-weight: 500; color: #0b8a31; text-align: center; }
    .hero { display: grid; grid-template-columns: minmax(0, 528fr) minmax(0, 788fr); padding: 46px 25px 0; }
    .title { margin: 6px 0 15px; font-size: 50px; line-height: 58px; font-weight: 600; white-space: nowrap; }
    .accent { color: #0b8a31; }
    .text { margin: 0 0 15px; font-size: 19px; line-height: 30px; white-space: nowrap; }
    .more { border: 0; border-radius: 7px; background: #0b8a31; color: #000; min-width: 191px; height: 54px; padding: 0 20px; font: 500 20px Montserrat, Inter, sans-serif; }
    .status { position: absolute; left: 0; bottom: 0; background: #202124; border-radius: 0 4px 0 0; padding: 0 9px 0 5px; font: 14px/26px "Open Sans", "Noto Sans", sans-serif; }
  `;
  render() {
    return html`
      <header class="header">
        <a class="logo" href="#home"><span class="up">UP</span>BEAT
          <svg width="33" height="28" viewBox="0 0 33 28" aria-hidden="true">
            <defs><linearGradient id="a" x1="0" y1="0" x2="0" y2="1"><stop stop-color="#25d06c" /><stop offset="1" stop-color="#178055" /></linearGradient></defs>
            <path d="M11 .5H31.5V21.5L27 16.5C21 24 11 28.5-.5 26C7 24.5 13.5 18.5 16.5 11.5Q14.5 8 17 6.5z" fill="url(#a)" />
            <path d="M2.5 25.8C10 25.5 16 21.5 20 17.5L24.5 17.8C19 23.5 11 26.8 2.5 25.8z" fill="#0c2432" />
            <path d="M4 25.3C12 25 19 21.5 24 17" fill="none" stroke="#178055" stroke-width=".6" />
          </svg>
        </a>
        <nav class="menu">
          <a href="#home">Home</a><a href="#clients">Clients</a><a href="#services">Services</a><a href="#career">Career</a>
          <a class="talk" href="#contact">Let's talk</a>
        </nav>
      </header>
      <main class="hero">
        <div>
          <h1 class="title">Innovative Solutions<br />To Move Your<br /><span class="accent">Music</span> To The World</h1>
          <p class="text">
            Over 8 years experience in providing top quality Music<br />Business solutions to Artistes and Management teams<br />Across the world.<br />One of the fastest ways to gain listenership all over the<br />world.
          </p>
          <button class="more">Find out more</button>
        </div>
        <world-map></world-map>
      </main>
      ${this.status ? html`<div class="status">${this.status}</div>` : nothing}
    `;
  }
}

@customElement("app-root")
class AppRoot extends LitElement {
  static styles = css`
    :host { display: flex; flex-direction: column; min-height: 100vh; }
    .page { flex: 1; }
  `;
  render() {
    return html`<browser-chrome></browser-chrome><site-page class="page"></site-page><task-bar></task-bar>`;
  }
}
